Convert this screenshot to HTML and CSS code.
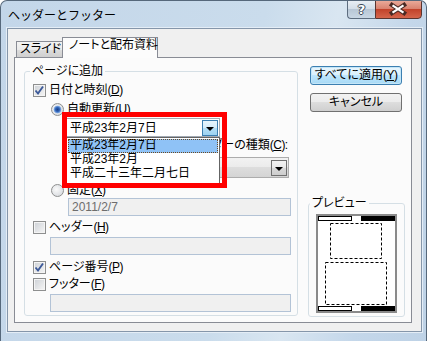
FILE: index.html
```html
<!DOCTYPE html>
<html>
<head>
  <meta charset="UTF-8" />
  <title>ヘッダーとフッター</title>
  <link rel="stylesheet" href="styles.css">
</head>
<body>
  <div class="window">
    <div class="titlebar">
      <div class="title">ヘッダーとフッター</div>
      <div class="caption">
        <div class="cap-help">?</div>
        <div class="cap-close">
          <svg width="47" height="19" viewBox="0 0 47 19">
            <path d="M17 5 L29 13 M29 5 L17 13" stroke="#4a2a24" stroke-width="4.4" stroke-linecap="square"/>
            <path d="M17.5 5.3 L28.5 12.7 M28.5 5.3 L17.5 12.7" stroke="#fff" stroke-width="2.2"/>
          </svg>
        </div>
      </div>
    </div>

    <div class="client">
      <div class="tabs">
        <div class="tab">スライド</div>
        <div class="tab active">ノートと配布資料</div>
      </div>

      <div class="panel">
        <fieldset class="group add">
          <legend>ページに追加</legend>
          <div class="row r-date"><span class="cb checked"><svg width="11" height="11" viewBox="0 0 11 11"><polyline points="1.5,5.5 4,8.5 9,1.5" fill="none" stroke="#3d5a99" stroke-width="1.9"/></svg></span><span>日付と時刻<span class="key">(<u>D</u>)</span></span></div>
          <div class="row r-sub"><span class="radio on"></span><span>自動更新<span class="key">(<u>U</u>)</span></span></div>

          <div class="combo-wrap">
            <div class="combo open">
              <span class="combo-text">平成23年2月7日</span>
              <span class="drop hot"><i class="tri"></i></span>
            </div>
            <div class="droplist">
              <div class="item selected">平成23年2月7日</div>
              <div class="item">平成23年2月</div>
              <div class="item">平成二十三年二月七日</div>
            </div>
            <div class="mark"></div>
          </div>

          <div class="row labels">
            <span class="lbl-cal">カレンダーの種類<span class="key">(<u>C</u>):</span></span>
          </div>
          <div class="combos">
            <div class="combo lang"><span class="combo-text"></span><span class="drop"><i class="tri"></i></span></div>
            <div class="combo cal"><span class="combo-text"></span><span class="drop"><i class="tri"></i></span></div>
          </div>

          <div class="row r-sub r-fixed"><span class="radio"></span><span>固定<span class="key">(<u>X</u>)</span></span></div>
          <div class="textbox tb-date">2011/2/7</div>

          <div class="row r-header"><span class="cb"></span><span>ヘッダー<span class="key">(<u>H</u>)</span></span></div>
          <div class="textbox tb-wide"></div>

          <div class="row r-page"><span class="cb checked"><svg width="11" height="11" viewBox="0 0 11 11"><polyline points="1.5,5.5 4,8.5 9,1.5" fill="none" stroke="#3d5a99" stroke-width="1.9"/></svg></span><span>ページ番号<span class="key">(<u>P</u>)</span></span></div>
          <div class="row r-footer"><span class="cb"></span><span>フッター<span class="key">(<u>F</u>)</span></span></div>
          <div class="textbox tb-wide"></div>
        </fieldset>

        <div class="side">
          <button class="btn default">すべてに適用<span class="key">(<u>Y</u>)</span></button>
          <button class="btn">キャンセル</button>

          <fieldset class="group preview">
            <legend>プレビュー</legend>
            <svg class="page" width="81" height="99" viewBox="0 0 81 99">
              <rect x="1" y="1" width="79" height="97" fill="#fff" stroke="#8a8a8a" stroke-width="2"/>
              <rect x="2.5" y="2.5" width="33" height="4" fill="#fff" stroke="#000"/>
              <rect x="45" y="2" width="34" height="5" fill="#000"/>
              <rect x="14.5" y="9.5" width="51" height="35" fill="none" stroke="#000" stroke-dasharray="3 2"/>
              <rect x="9.5" y="48.5" width="61" height="42" fill="none" stroke="#000" stroke-dasharray="3 2"/>
              <rect x="2.5" y="92.5" width="33" height="4" fill="#fff" stroke="#000"/>
              <rect x="45" y="92" width="34" height="5" fill="#000"/>
            </svg>
          </fieldset>
        </div>
      </div>
    </div>
  </div>
</body>
</html>
```

FILE: styles.css
```css
body {
  margin: 0;
  background: #fff;
  font-family: "Liberation Sans", "Noto Sans CJK JP", sans-serif;
  font-size: 12px;
  color: #000;
  text-autospace: no-autospace;
}
.key {
  font-family: "Liberation Sans", sans-serif;
  letter-spacing: -0.5px;
}
.window {
  width: 427px;
  height: 341px;
  box-sizing: border-box;
  border: 1px solid #56687b;
  border-bottom: none;
  border-radius: 7px 7px 0 0;
  background: linear-gradient(100deg, #c3d6e9 0%, #cadcec 55%, #d9e6f1 70%, #c4d7ea 85%, #bed2e6 100%);
  overflow: hidden;
}
.titlebar {
  display: flex;
  height: 27px;
}
.title {
  flex: 1;
  padding: 7px 0 0 7px;
  line-height: 14px;
  font-family: "Noto Sans CJK JP", sans-serif;
  color: #000;
}
.caption {
  display: flex;
  align-self: flex-start;
  margin: -1px 4px 0 0;
}
.cap-help {
  width: 28px;
  height: 19px;
  box-sizing: border-box;
  border: 1px solid #5d6d7f;
  border-right: none;
  border-radius: 0 0 0 4px;
  background: linear-gradient(#e8eef4, #d4dee8 45%, #b8c7d6 50%, #c9d7e4);
  color: #fff;
  font: bold 13px "DejaVu Sans", sans-serif;
  text-align: center;
  line-height: 18px;
  text-shadow: 1px 0 0 #3b4756, -1px 0 0 #3b4756, 0 1px 0 #3b4756, 0 -1px 0 #3b4756;
}
.cap-close {
  width: 47px;
  height: 19px;
  box-sizing: border-box;
  border: 1px solid #5a3530;
  border-radius: 0 0 4px 0;
  background: linear-gradient(#eaa998, #d98370 45%, #c2432b 50%, #d5654b);
  overflow: hidden;
}
.cap-close svg {
  display: block;
  margin: -1px 0 0 -1px;
}

.client {
  width: 415px;
  height: 304px;
  box-sizing: border-box;
  margin-left: 6px;
  border: 1px solid #8596aa;
  background: #f0f0f0;
  padding: 8px 9px 0 6px;
  box-shadow: 0 0 0 1px #e4edf6;
}
.tabs {
  display: flex;
  align-items: flex-end;
  height: 20px;
  margin-left: 2px;
}
.tab {
  width: 47px;
  height: 16px;
  box-sizing: border-box;
  border: 1px solid #898c95;
  border-bottom: none;
  background: linear-gradient(#f3f3f3, #ebebeb 50%, #dddddd 50%, #cfcfcf);
  padding-left: 3px;
  line-height: 14px;
  font-feature-settings: "palt";
  white-space: nowrap;
}
.tab.active {
  width: 96px;
  height: 21px;
  margin-left: -1px;
  margin-bottom: -1px;
  padding-left: 6px;
  background: #fcfcfc;
  position: relative;
  z-index: 1;
}

.panel {
  display: flex;
  align-items: flex-start;
  gap: 10px;
  height: 266px;
  box-sizing: border-box;
  border: 1px solid #898c95;
  background: #fbfbfb;
  padding: 6px 6px 0 9px;
  font-feature-settings: "palt";
}
.group {
  margin: 0;
  border: 1px solid #d5dfe5;
  border-radius: 3px;
  min-inline-size: 0;
}
.group legend {
  padding: 0 2px;
  line-height: 14px;
  height: 14px;
}
.add {
  width: 275px;
  box-sizing: border-box;
  padding: 0 8px 3px;
}
.add legend {
  margin-left: -3px;
}

.row {
  display: flex;
  align-items: center;
  gap: 3px;
  height: 13px;
  line-height: 13px;
  white-space: nowrap;
}
.r-date { margin-top: 6px; }
.r-sub { margin-top: 6px; margin-left: 18px; }
.r-fixed { margin-top: 6px; }
.r-header { margin-top: 5px; }
.r-page { margin-top: 6px; }
.r-footer { margin-top: 4px; }

.cb {
  flex: none;
  width: 13px;
  height: 13px;
  box-sizing: border-box;
  border: 1px solid #8e8f8f;
  background: linear-gradient(135deg, #cdd1d6, #f6f6f6);
  box-shadow: inset 0 0 0 1px #f4f4f4;
}
.cb svg {
  display: block;
}
.radio {
  flex: none;
  width: 13px;
  height: 13px;
  box-sizing: border-box;
  border: 1px solid #8e8f8f;
  border-radius: 50%;
  background: radial-gradient(circle at 40% 40%, #fafafa, #d0d4d9);
}
.radio.on {
  background:
    radial-gradient(circle at 50% 50%, #1b3f86 0, #2e62b5 2px, #7fa9e4 3.5px, transparent 4.2px),
    radial-gradient(circle at 40% 40%, #fafafa, #d0d4d9);
}

.combo-wrap {
  position: relative;
  width: 154px;
  height: 19px;
  margin: 2px 0 0 33px;
}
.combo {
  display: flex;
  height: 19px;
  box-sizing: border-box;
  border: 1px solid #a3aab3;
  background: #fff;
  padding: 1px;
  line-height: 16px;
}
.combo-text {
  flex: 1;
  padding-left: 2px;
  white-space: nowrap;
  overflow: hidden;
}
.drop {
  flex: none;
  width: 16px;
  height: 16px;
  box-sizing: border-box;
  border: 1px solid #707070;
  background: linear-gradient(#f3f3f3, #e8e8e8 50%, #d9d9d9 50%, #cdcdcd);
  display: flex;
  align-items: center;
  justify-content: center;
}
.drop.hot {
  border-color: #3c7fb1;
  background: linear-gradient(#e8f5fc, #d3ecfa 50%, #b4def6 50%, #9dd3f1);
}
.tri {
  width: 0;
  height: 0;
  border-left: 4px solid transparent;
  border-right: 4px solid transparent;
  border-top: 4px solid #000;
  margin-top: 1px;
}
.droplist {
  position: absolute;
  left: 0;
  top: 19px;
  width: 154px;
  height: 47px;
  box-sizing: border-box;
  border: 1px solid #646464;
  background: #fff;
  padding: 1px;
  z-index: 2;
}
.item {
  height: 14px;
  box-sizing: border-box;
  line-height: 13px;
  padding-left: 2px;
  white-space: nowrap;
}
.item.selected {
  background: #8fc2f6;
  outline: 1px dotted #6b4a22;
  outline-offset: -1px;
}
.mark {
  position: absolute;
  left: -4px;
  top: -6px;
  width: 165px;
  height: 76px;
  box-sizing: border-box;
  border: 5px solid #ff0000;
  z-index: 3;
}

.labels {
  margin-top: 2px;
}
.lbl-cal { margin-left: 146px; }
.combos {
  display: flex;
  margin-top: 5px;
}
.combos .combo {
  height: 21px;
  padding: 2px 1px;
  border-color: #acacac;
  background: linear-gradient(#f2f2f2, #ebebeb 50%, #dddddd 50%, #d4d4d4);
}
.combo.lang { width: 104px; margin-left: 34px; }
.combo.cal { width: 113px; margin-left: 7px; }

.textbox {
  height: 18px;
  box-sizing: border-box;
  border: 1px solid #b3c3d6;
  background: #f0f0f0;
  color: #6d6d6d;
  line-height: 16px;
  padding-left: 3px;
  margin-top: 3px;
}
.tb-date { width: 223px; margin: 1px 0 0 35px; }
.tb-wide { width: 241px; margin-left: 17px; }

.side {
  width: 97px;
  padding-top: 2px;
  display: flex;
  flex-direction: column;
}
.btn {
  width: 92px;
  height: 19px;
  margin: 0 0 0 2px;
  padding: 0;
  border: 1px solid #707070;
  border-radius: 3px;
  background: linear-gradient(#f2f2f2, #ebebeb 50%, #dddddd 50%, #cfcfcf);
  font: inherit;
  line-height: 15px;
  color: #000;
  font-feature-settings: "palt";
}
.btn + .btn { margin-top: 8px; }
.btn.default {
  border-color: #3c7fb1;
  background: linear-gradient(#eaf6fd, #d9f0fc 50%, #bee6fd 50%, #a7d9f5);
  box-shadow: inset 0 0 0 1px #c4e6f8;
}
.preview {
  width: 97px;
  box-sizing: border-box;
  margin-top: 84px;
  padding: 0 0 3px 7px;
}
.preview legend {
  margin-left: -6px;
}
.page {
  display: block;
  margin-top: 4px;
}
```
